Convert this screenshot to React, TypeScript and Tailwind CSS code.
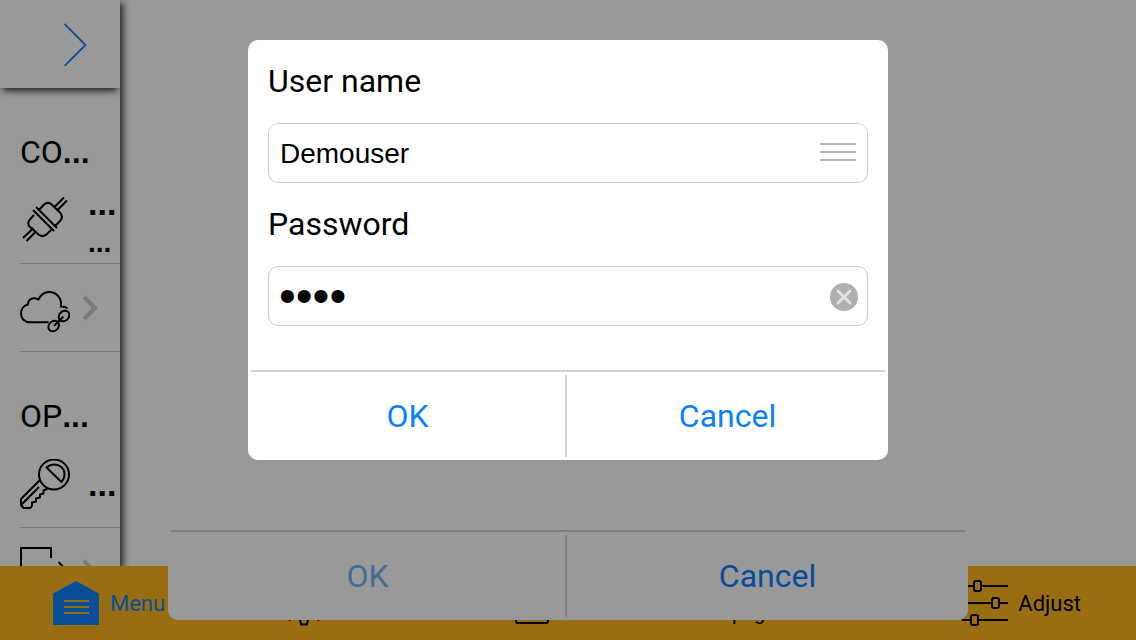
import React, { useState } from "react";

const line = {
  fill: "none",
  stroke: "currentColor",
  strokeWidth: 2,
} as const;

function PlugIcon() {
  return (
    <svg viewBox="0 0 50 50" className="size-[50px] shrink-0" {...line} aria-hidden="true">
      <path d="M13 15L34 36M16 12L37 33" />
      <path d="M19 15L23.5 10Q27.5 6 31.7 9.5L40 17.5Q43.5 22 40.5 25.5L35.5 30.5" />
      <path d="M14 20L10 24.5Q6.500 28.500 10 32L18.500 39.500Q23 43 27 39L31.500 34.500" />
      <path d="M34 12.500L44 2.500M37 15.500L47 5.500M13.500 33L3 43M16.500 36L6.500 46" />
    </svg>
  );
}

function CloudLinkIcon() {
  return (
    <svg viewBox="0 0 50 50" className="size-[50px] shrink-0" {...line} aria-hidden="true">
      <path d="M28.500 39.200H10C4.500 39.200 1 35.500 1 30.500C1 26 4 22.500 8 21.500C8 16 13 13.500 18.500 16.500C21 11.500 25 9 29 9C36.500 9 42 15 41 23.500C44 23.300 46 24 47.500 25.500" />
      <ellipse cx="44" cy="33" rx="5.800" ry="4.800" transform="rotate(-45 44 33)" />
      <ellipse cx="33.700" cy="43" rx="5.800" ry="4.800" transform="rotate(-45 33.700 43)" />
      <path d="M43.500 33.500L34.200 42.800" />
    </svg>
  );
}

function KeyIcon() {
  return (
    <svg viewBox="0 0 50 50" className="size-[50px] shrink-0" {...line} strokeLinejoin="round" aria-hidden="true">
      <circle cx="34" cy="15.500" r="15" />
      <path d="M26.500 8.500C34 2 45 7 44.500 16Q44.300 20 41.500 23Z" />
      <path d="M19.500 21.500L1 40V46L3.500 49H10.500L12 47V43.500L16 42.500V39.500L20 38.500V35.500L23.500 34.500V31.500L28 29.500" />
      <path d="M19 28L1.500 45.500" />
    </svg>
  );
}

function ExitIcon() {
  return (
    <svg viewBox="0 0 50 50" className="size-[50px] shrink-0" {...line} aria-hidden="true">
      <path d="M31 11V1H1V49H31V39M38.500 15L48 25L38.500 35M48 25H16" />
    </svg>
  );
}

function RowChevron() {
  return (
    <svg viewBox="0 0 16 26" className="ml-3 h-[26px] w-4 shrink-0 text-[#cbcbcb]" fill="none" stroke="currentColor" strokeWidth="4" aria-hidden="true">
      <path d="M2 2L13 13L2 24" />
    </svg>
  );
}

function MenuIcon() {
  return (
    <svg viewBox="0 0 46 44" className="h-11 w-[46px] shrink-0" aria-hidden="true">
      <path d="M0 12.500L23 0L46 12.500V44H0Z" fill="currentColor" />
      <path d="M11 20H36M11 26H36M11 32H36" stroke="#ffb81e" strokeWidth="2" />
    </svg>
  );
}

function LampIcon() {
  return (
    <svg viewBox="0 0 46 46" className="size-[46px] shrink-0" {...line} aria-hidden="true">
      <path d="M16 30C10 22 14 10 23 10S36 22 30 30ZM18.500 36L20 44.500H26L27.500 36M11 37L8 40.500M35 37L38 40.500" />
    </svg>
  );
}

function ScreenIcon() {
  return (
    <svg viewBox="0 0 46 46" className="size-[46px] shrink-0" {...line} aria-hidden="true">
      <rect x="7" y="5" width="32" height="38" rx="2" />
    </svg>
  );
}

function AdjustIcon() {
  return (
    <svg viewBox="0 0 48 46" className="h-[46px] w-12 shrink-0" {...line} aria-hidden="true">
      <path d="M1 6H14M22 6H48M1 23H32M40 23H48M2 40H11M19 40H48" />
      <rect x="14" y="1" width="7" height="10" rx="2" />
      <rect x="32" y="18" width="7" height="10" rx="2" />
      <rect x="11" y="35" width="7" height="10" rx="2" />
    </svg>
  );
}

function SideHeading({ children }: { children: React.ReactNode }) {
  return (
    <h2 className="flex h-[88px] items-center pt-10 pl-5 text-[32px] leading-none whitespace-nowrap">
      <span>
        {children}
        <span className="font-['Liberation_Sans',sans-serif] font-bold">...</span>
      </span>
    </h2>
  );
}

function SideRow({ children }: { children: React.ReactNode }) {
  return (
    <button type="button" className="ml-5 flex h-[88px] items-center border-b border-[#cbcbcb] text-left whitespace-nowrap">
      {children}
    </button>
  );
}

function DialogActions({ okDisabled = false }: { okDisabled?: boolean }) {
  return (
    <div className="flex flex-col">
      <div className="mx-[3px] h-0.5 bg-[#d3d3d3]" />
      <div className="grid h-[88px] grid-cols-[1fr_2px_1fr] pr-1 text-[32px] text-[#0a80ff]">
        <button type="button" disabled={okDisabled} className="pl-0.5 disabled:opacity-60">
          OK
        </button>
        <div className="my-[3px] bg-[#d3d3d3]" />
        <button type="button" className="pl-1">
          Cancel
        </button>
      </div>
    </div>
  );
}

function Sidebar() {
  return (
    <aside className="w-[120px] shrink-0 bg-white shadow-[3px_3px_7px_rgba(0,0,0,0.8)]">
      <div className="flex h-full flex-col overflow-hidden">
        <button
          type="button"
          aria-label="Expand"
          className="flex h-[88px] shrink-0 items-center justify-end bg-white pr-8 text-[#1283ff] shadow-[0_6px_7px_-3px_rgba(0,0,0,0.8)]"
        >
          <svg viewBox="0 0 24 44" className="h-11 w-6" fill="none" stroke="currentColor" strokeWidth="1.800" aria-hidden="true">
            <path d="M0.500 2L21.500 23L0.500 44" />
          </svg>
        </button>
        <nav className="flex flex-col *:shrink-0">
          <SideHeading>CO</SideHeading>
          <SideRow>
            <PlugIcon />
            <span className="flex flex-col pt-1.5 pl-[18px] font-['Liberation_Sans',sans-serif] font-bold">
              <span className="text-[34px] leading-10">...</span>
              <span className="text-[28px] leading-10">...</span>
            </span>
          </SideRow>
          <SideRow>
            <CloudLinkIcon />
            <RowChevron />
          </SideRow>
          <SideHeading>OP</SideHeading>
          <SideRow>
            <KeyIcon />
            <span className="pl-[18px] font-['Liberation_Sans',sans-serif] text-[34px] leading-10 font-bold">...</span>
          </SideRow>
          <SideRow>
            <ExitIcon />
            <RowChevron />
          </SideRow>
        </nav>
      </div>
    </aside>
  );
}

export default function App() {
  const [user, setUser] = useState("Demouser");
  const [password, setPassword] = useState("demo");

  return (
    <div className="relative flex h-screen flex-col overflow-hidden bg-white font-['Roboto',sans-serif] text-black">
      <div className="flex min-h-0 flex-1 overflow-hidden">
        <Sidebar />
        <main className="flex-1" />
      </div>

      <footer className="flex h-[74px] shrink-0 items-center bg-[#ffb81e] pr-[55px] pl-[53px] text-[22px]">
        <button type="button" className="flex w-[228px] items-center gap-[11px] text-[#1283ff]">
          <MenuIcon />
          Menu
        </button>
        <button type="button" aria-label="Light" className="flex w-[228px] items-center">
          <LampIcon />
        </button>
        <button type="button" aria-label="Screen" className="flex w-[223px] items-center">
          <ScreenIcon />
        </button>
        <button type="button" className="pt-5 text-left text-xl leading-[18px]">
          page
        </button>
        <button type="button" className="ml-auto flex items-center gap-2.5">
          <AdjustIcon />
          Adjust
        </button>
      </footer>

      <div className="absolute inset-0 flex justify-center py-5">
        <section className="flex w-[800px] flex-col justify-end rounded-[10px] bg-white">
          <DialogActions okDisabled />
        </section>
      </div>

      <div className="absolute inset-0 flex items-start justify-center bg-black/40 pt-10">
        <form role="dialog" aria-label="Login" className="w-[640px] rounded-[10px] bg-white" onSubmit={(e) => e.preventDefault()}>
          <div className="px-5 pb-11">
            <label htmlFor="user" className="flex h-[83px] items-center pb-0.5 text-[32px]">
              User name
            </label>
            <div className="flex h-[60px] items-center rounded-[10px] border border-[#ccc] px-[11px]">
              <input
                id="user"
                type="text"
                value={user}
                onChange={(e) => setUser(e.target.value)}
                className="h-full min-w-0 flex-1 bg-transparent pt-0.5 font-['Liberation_Sans',sans-serif] text-[28px] outline-none"
              />
              <button type="button" aria-label="Select user" className="flex w-9 flex-col gap-1.5 pb-0.5">
                <span className="h-0.5 bg-[#b3b3b3]" />
                <span className="h-0.5 bg-[#b3b3b3]" />
                <span className="h-0.5 bg-[#b3b3b3]" />
              </button>
            </div>
            <label htmlFor="password" className="flex h-[83px] items-center pb-0.5 text-[32px]">
              Password
            </label>
            <div className="flex h-[60px] items-center rounded-[10px] border border-[#ccc] pr-[9px] pl-2.5">
              <input
                id="password"
                type="password"
                value={password}
                onChange={(e) => setPassword(e.target.value)}
                className="h-full min-w-0 flex-1 bg-transparent pb-0.5 font-['Liberation_Sans',sans-serif] text-[48px] outline-none"
              />
              <button type="button" aria-label="Clear password" className="pt-0.5" onClick={() => setPassword("")}>
                <svg viewBox="0 0 28 28" className="block size-7" aria-hidden="true">
                  <circle cx="14" cy="14" r="14" fill="#b0b0b0" />
                  <path d="M8 8L20 20M20 8L8 20" stroke="#e4e4e4" strokeWidth="2.800" strokeLinecap="round" />
                </svg>
              </button>
            </div>
          </div>
          <DialogActions />
        </form>
      </div>
    </div>
  );
}
